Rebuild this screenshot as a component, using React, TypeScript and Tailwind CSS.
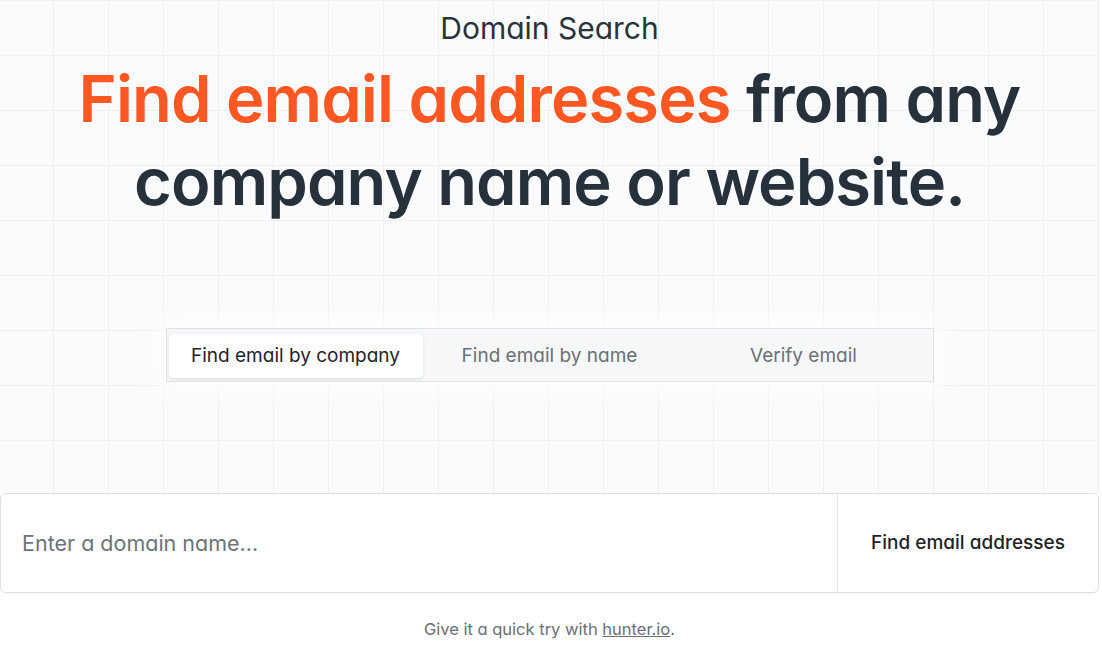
import { useState } from "react";

const tabs = ["Find email by company", "Find email by name", "Verify email"];

function SearchTabs() {
  const [active, setActive] = useState(0);
  return (
    <div className="mx-auto grid w-[768px] grid-cols-3 border border-[#dfe2e7] bg-[#f6f7f9] px-[2px] pb-[3px] pt-[5px] shadow-[0_0_24px_8px_rgba(255,255,255,0.9)]">
      {tabs.map((t, i) => (
        <button
          key={t}
          onClick={() => setActive(i)}
          className={
            i === active
              ? "h-[44px] rounded-[4px] bg-white text-[19px] text-[#1f2329] shadow-[0_1px_3px_rgba(16,24,40,0.12)]"
              : "h-[44px] rounded-[4px] text-[19px] text-[#6b7177]"
          }
        >
          {t}
        </button>
      ))}
    </div>
  );
}

export default function App() {
  return (
    <div className="min-h-screen bg-white font-['Inter','Liberation_Sans',sans-serif] [font-feature-settings:'cv11']">
      <div className="w-[1099px]">
        {/* hero with the faint square grid */}
        <div className="bg-[#fafbfc] bg-[linear-gradient(to_right,#eff0f3_1px,transparent_1px),linear-gradient(to_bottom,#eff0f3_1px,transparent_1px)] bg-[size:55px_55px] bg-[position:53px_0] pb-[111px] pt-[10px]">
          <h2 className="text-center text-[30px] leading-[36px] text-[#2a333c]">Domain Search</h2>
          <h1 className="mt-[11px] text-center text-[65px] font-semibold leading-[83px] tracking-[-0.9px] text-[#27313b]">
            <span className="text-[#ff5722]">Find email addresses</span> from any
            <br />
            company name or website.
          </h1>
          <div className="mt-[105px]">
            <SearchTabs />
          </div>
        </div>

        <form
          onSubmit={(e) => e.preventDefault()}
          className="flex h-[100px] overflow-hidden rounded-[6px] border border-[#dde1e6] bg-white shadow-[0_1px_2px_rgba(16,24,40,0.04)]"
        >
          <input
            placeholder="Enter a domain name..."
            className="min-w-0 flex-1 px-[21px] text-[21.5px] text-[#27313b] outline-none placeholder:text-[#6d7378]"
          />
          <button className="w-[261px] border-l border-[#e6e8eb] text-[19px] font-medium text-[#1f2329]">
            Find email addresses
          </button>
        </form>

        <p className="mt-[24px] text-center text-[16.5px] leading-[24px] text-[#6b7075]">
          Give it a quick try with <a className="underline">hunter.io</a>.
        </p>
      </div>
    </div>
  );
}
